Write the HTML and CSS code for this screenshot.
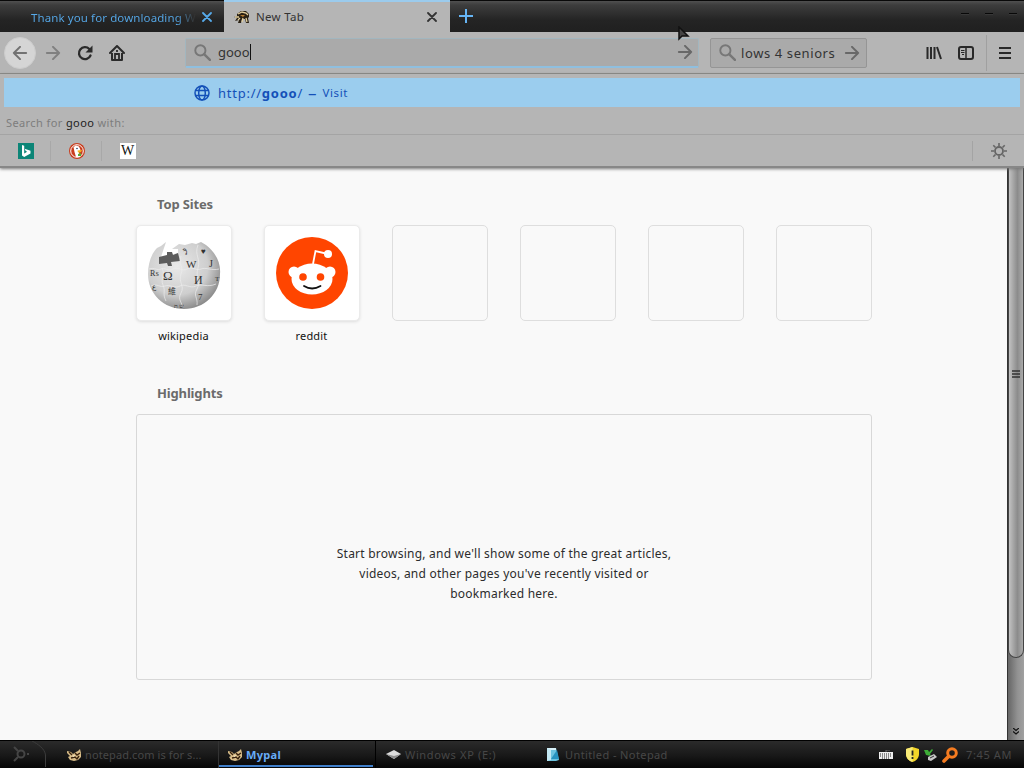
FILE: index.html
```html
<!DOCTYPE html>
<html lang="en">
<head>
    <meta charset="UTF-8">
    <meta name="viewport" content="width=device-width, initial-scale=1.0">
    <title>New Tab</title>
    <link rel="stylesheet" href="styles.css">
</head>
<body>

<svg class="sprites" width="0" height="0">
    <symbol id="arrow" viewBox="0 0 16 16">
        <path d="M1 8h14M8 1l7 7-7 7" fill="none" stroke="currentColor" stroke-width="2.300" stroke-linecap="round" stroke-linejoin="round"/>
    </symbol>
    <symbol id="search" viewBox="0 0 16 16">
        <circle cx="6" cy="6" r="4.800" fill="none" stroke="currentColor" stroke-width="1.800"/>
        <path d="M9.700 9.700L15 15" stroke="currentColor" stroke-width="2.300" stroke-linecap="round"/>
    </symbol>
    <symbol id="close" viewBox="0 0 10 10">
        <path d="M1 1l8 8M9 1L1 9" stroke="currentColor" stroke-width="1.800" stroke-linecap="round"/>
    </symbol>
    <symbol id="badger" viewBox="0 0 16 14">
        <path d="M3 4l4-3 5 0 3 3 0 3-1 1 1 5h-3l-1-4-3 0-1 4H4l1-3-4 1 2-3-3-1 3-1z" fill="#2b2215"/>
        <path d="M4 4l4-2 4 1 2 2M1 7l4 0M4 10l2-2M8 12l1-4M12 8l1 4" stroke="#e2cf9e" stroke-width="1.300" fill="none"/>
        <path d="M6 5l5 0-2 2z" fill="#b57b32"/>
    </symbol>
    <symbol id="mypal" viewBox="0 0 14 12">
        <path d="M0 2l4 1 2 2 3-2 2-1 2-2 1 4 0 4-3 3-4 1-4-1-2-3 2-1-3-3z" fill="#d9bd88"/>
        <path d="M2 3l3 3M8 4l2 2 3-2M4 9l4-1 2 2 2-3" stroke="#39230f" stroke-width="1.400" fill="none"/>
        <path d="M5 7l3-1-1 2z" fill="#fff3d2"/>
    </symbol>
</svg>

<div class="window">
    <header class="titlebar">
        <div class="tab">
            <span class="tab-label">Thank you for downloading W</span>
            <svg class="close" width="10" height="10"><use href="#close"/></svg>
        </div>
        <div class="tab active">
            <svg width="16" height="14"><use href="#badger"/></svg>
            <span class="tab-label">New Tab</span>
            <svg class="close" width="10" height="10"><use href="#close"/></svg>
        </div>
        <svg class="new-tab" width="14" height="14" viewBox="0 0 14 14"><path d="M7 0v14M0 7h14" stroke="currentColor" stroke-width="2"/></svg>
        <div class="window-buttons"><i></i><i></i><i></i></div>
    </header>

    <nav class="toolbar">
        <div class="nav-buttons">
            <span class="back"><svg class="flip" width="16" height="14"><use href="#arrow"/></svg></span>
            <svg class="forward" width="16" height="14"><use href="#arrow"/></svg>
            <svg class="reload" width="16" height="16" viewBox="0 0 16 16"><path d="M13.500 10.500A6 6 0 1 1 12.300 4" fill="none" stroke="currentColor" stroke-width="2.300" stroke-linecap="round"/><path d="M15.500 0.500v7H8.500z" fill="currentColor"/></svg>
            <svg class="home" width="16" height="16" viewBox="0 0 16 16"><path d="M1 8l7-7 7 7" fill="none" stroke="currentColor" stroke-width="2" stroke-linecap="round" stroke-linejoin="round"/><path d="M3 8v7h10V8" fill="none" stroke="currentColor" stroke-width="2" stroke-linejoin="round"/><path d="M6 14V9h4v5M8 5v2" stroke="currentColor" stroke-width="1.800" fill="none"/></svg>
        </div>
        <div class="urlbar">
            <svg width="17" height="17"><use href="#search"/></svg>
            <span class="typed">gooo</span>
            <svg class="go" width="16" height="14"><use href="#arrow"/></svg>
        </div>
        <div class="searchbar">
            <svg width="17" height="17"><use href="#search"/></svg>
            <span class="search-text">lows 4 seniors</span>
            <svg class="go" width="16" height="14"><use href="#arrow"/></svg>
        </div>
        <div class="tools">
            <svg width="16" height="14" viewBox="0 0 16 14"><path d="M1.500 1v12M5 1v12M8.500 1v12M11 1l4 12" stroke="currentColor" stroke-width="2" fill="none"/></svg>
            <svg width="16" height="14" viewBox="0 0 16 14"><rect x="1" y="1" width="14" height="12" rx="2" fill="none" stroke="currentColor" stroke-width="2"/><path d="M8 1v12" stroke="currentColor" stroke-width="1.500"/><path d="M3 4.500h3.500M3 6.500h3.500M4 8.500h2" stroke="currentColor"/></svg>
            <span class="menu"><svg width="12" height="12" viewBox="0 0 12 12"><path d="M0 1h12M0 6h12M0 11h12" stroke="currentColor" stroke-width="2"/></svg></span>
        </div>
    </nav>

    <section class="results">
        <div class="result">
            <svg width="16" height="16" viewBox="0 0 16 16" fill="none" stroke="currentColor" stroke-width="1.500"><circle cx="8" cy="8" r="7"/><ellipse cx="8" cy="8" rx="3.300" ry="7"/><path d="M1.500 5.500h13M1.500 10.500h13"/></svg>
            <span class="url">http://<b>gooo</b>/</span>
            <span class="dash">–</span>
            <span class="visit">Visit</span>
        </div>
        <div class="search-with">Search for <b>gooo</b> with:</div>
        <div class="engines">
            <span class="engine"><svg width="16" height="16" viewBox="0 0 16 16"><rect width="16" height="16" fill="#0c8577"/><path d="M4 2l2.200.8v7.700l3-1.700-1.500-.8-1-2.300 5.800 2.100v2.800L6.200 14 4 12.500z" fill="#fff"/></svg></span>
            <span class="engine"><svg width="16" height="16" viewBox="0 0 16 16"><circle cx="8" cy="8" r="8" fill="#c93d1e"/><circle cx="8" cy="8" r="6.300" fill="#c93d1e" stroke="#fff"/><path d="M4.500 4l2.500-1.500 3 1L11.500 7 10 9l1 5H7L5.500 9z" fill="#fff"/><path d="M8.500 7.500l4.500-.5-1 2-3 .5z" fill="#f6b21a"/><path d="M9 11l3-1v3H9z" fill="#56a834"/><circle cx="8" cy="5.500" r=".8" fill="#243b66"/></svg></span>
            <span class="engine"><span class="wiki-engine">W</span></span>
            <span class="settings"><svg width="16" height="16" viewBox="0 0 16 16" fill="none" stroke="currentColor"><circle cx="8" cy="8" r="4" stroke-width="1.800"/><path d="M8 0v3M8 13v3M0 8h3M13 8h3M2.300 2.300l2.200 2.200M11.500 11.500l2.200 2.200M2.300 13.700l2.200-2.200M11.500 4.500l2.200-2.200" stroke-width="1.600"/></svg></span>
        </div>
    </section>

    <div class="page">
        <main class="content">
            <h2>Top Sites</h2>
            <div class="sites">
                <div class="site">
                    <div class="tile filled">
                        <svg width="74" height="74" viewBox="0 0 74 74">
                            <defs><radialGradient id="ball" cx=".4" cy=".36" r=".66"><stop offset="0" stop-color="#e9e9e9"/><stop offset=".65" stop-color="#cecece"/><stop offset="1" stop-color="#8c8c8c"/></radialGradient></defs>
                            <path d="M10 12l4-2 5-4-2 6-3 9 17-4 0-4-6 0 7-5 6 1 7-2 4 1 5-2 5 3C69 17 74 27 73 38 73 58 57 73 37 73S1 58 1 38C1 28 4 18 10 12z" fill="url(#ball)"/>
                            <path d="M12 21l8-2 0-3h5l1 3 5-2 2 8-9 1 1 4h-4l-1-3-8 1z" fill="#5c5c5c"/>
                            <path d="M2 33c6-2 8 2 12 0s7 3 12 0 9 3 14 0 9 2 14 0 11 2 18 0M4 50c6-3 9 2 14 0s10 3 15 0 10 3 16 0 11 2 20-2M15 32c4 8-2 10 1 17s-1 8 3 16M34 20c-3 9 3 10 0 18s4 12 0 19 2 10 1 14M51 9c-4 10 3 14 0 23s3 14-1 21 1 8 0 16" fill="none" stroke="#ededed" stroke-width=".7"/>
                            <g class="glyphs"><text x="16" y="44" font-size="13">Ω</text><text x="39" y="32" font-size="11">W</text><text x="47" y="48" font-size="12">И</text><text x="21" y="58" font-size="8">維</text><text x="62" y="31" font-size="10">J</text><text x="51" y="64" font-size="9">7</text><text x="36" y="19" font-size="8">วิ</text><text x="54" y="18" font-size="8">♥</text><text x="3" y="40" font-size="8">₨</text><text x="5" y="53" font-size="7">ع</text><text x="27" y="72" font-size="6">ש ת</text><text x="68" y="45" font-size="7">T</text></g>
                        </svg>
                    </div>
                    <span>wikipedia</span>
                </div>
                <div class="site">
                    <div class="tile filled">
                        <svg width="72" height="72" viewBox="0 0 72 72">
                            <circle cx="36" cy="36" r="36" fill="#ff4500"/>
                            <path d="M37 27l2.500-13L52 17" fill="none" stroke="#fff" stroke-width="1.800"/>
                            <g fill="#fff"><circle cx="52" cy="17" r="4"/><circle cx="18" cy="35" r="5.500"/><circle cx="54" cy="35" r="5.500"/><ellipse cx="36" cy="42" rx="20.500" ry="15.500"/></g>
                            <circle cx="27" cy="40" r="3.800" fill="#ff4500"/><circle cx="44.500" cy="40" r="3.800" fill="#ff4500"/>
                            <path d="M28 49q8 5 16.500 0" fill="none" stroke="#111" stroke-width="1.800" stroke-linecap="round"/>
                        </svg>
                    </div>
                    <span>reddit</span>
                </div>
                <div class="site"><div class="tile"></div></div>
                <div class="site"><div class="tile"></div></div>
                <div class="site"><div class="tile"></div></div>
                <div class="site"><div class="tile"></div></div>
            </div>
            <h2>Highlights</h2>
            <div class="highlights">
                <p>Start browsing, and we'll show some of the great articles,<br>videos, and other pages you've recently visited or<br>bookmarked here.</p>
            </div>
        </main>
        <div class="scrollbar">
            <div class="thumb"><svg width="8" height="8" viewBox="0 0 8 8"><path d="M0 1h8M0 4h8M0 7h8" stroke="#333" stroke-width="1.400"/></svg></div>
            <svg class="down" width="6" height="7" viewBox="0 0 6 7"><path d="M0 0l3 2.500L6 0M0 3.500L3 6l3-2.500" fill="none" stroke="#111" stroke-width="1.300"/></svg>
        </div>
    </div>

    <footer class="taskbar">
        <div class="start">
            <svg width="46" height="26" viewBox="0 0 46 26"><path d="M32 0c6 3 13 8 13.500 14v12" fill="none" stroke="#3c3c3c"/><g fill="none" stroke="#454545" stroke-width="2"><circle cx="21" cy="13" r="3.500"/><path d="M14 6l4 4M14 20l4-4M27 13h2"/></g></svg>
        </div>
        <div class="task task-note"><svg width="14" height="12"><use href="#mypal"/></svg><span>notepad.com is for s...</span></div>
        <div class="task task-mypal current"><svg width="14" height="12"><use href="#mypal"/></svg><span>Mypal</span></div>
        <div class="task task-drive"><svg width="15" height="9" viewBox="0 0 15 9"><path d="M0 4l8-4 7 4-7 5z" fill="#ddd"/><path d="M0 4l8 2 7-2-7 5z" fill="#8e8e8e"/></svg><span>Windows XP (E:)</span></div>
        <div class="task task-untitled"><svg width="14" height="15" viewBox="0 0 14 15"><path d="M1 1h9l3 12-3 1-9 0z" fill="#6cc3df"/><path d="M1 1h9v2H1z" fill="#d8f2fa"/><path d="M1 1v13l4-1V3z" fill="#c4e9f4"/><path d="M5 12l6-9 2 9z" fill="#2893bf"/></svg><span>Untitled - Notepad</span></div>
        <div class="tray">
            <svg class="keyboard" width="14" height="9" viewBox="0 0 14 9"><path d="M7 2V0h4" fill="none" stroke="#666"/><rect y="2" width="14" height="7" fill="#eee"/><path d="M1 4h12M1 6h12M3 8h8" stroke="#222" stroke-dasharray="1 1"/></svg>
            <svg width="13" height="15" viewBox="0 0 13 15"><path d="M6.500 0L13 2v5c0 4-3 7-6.500 8C3 14 0 11 0 7V2z" fill="#f3d529"/><path d="M6.500 0L0 2v5c0 4 3 7 6.500 8z" fill="#f9eb78"/><path d="M6.500 3.500v5M6.500 10v2" stroke="#222" stroke-width="1.800"/></svg>
            <svg width="13" height="13" viewBox="0 0 13 13"><path d="M0 2l4 0 1 2 3-3 1 1-3 4 1 2-5-1z" fill="#3dac37"/><path d="M4 9l6-3 3 3-6 4-3-1z" fill="#c8c8c8"/><path d="M6 10l4-2" stroke="#333"/></svg>
            <svg class="magnifier" width="16" height="16" viewBox="0 0 16 16"><circle cx="10" cy="6" r="4.300" fill="none" stroke="#f47b20" stroke-width="3"/><path d="M6.500 9.500L2 14" stroke="#f47b20" stroke-width="3.600" stroke-linecap="round"/></svg>
            <span class="clock">7:45 AM</span>
        </div>
    </footer>

    <svg class="cursor" width="12" height="15" viewBox="0 0 12 15"><path d="M1 1v12l3-3 6 0z" fill="#444" stroke="#111" stroke-width="1.500"/></svg>
</div>

</body>
</html>
```

FILE: styles.css
```css
* {
    box-sizing: border-box;
}
body {
    margin: 0;
    font-family: "Noto Sans", sans-serif;
    font-size: 12px;
    color: #222;
}
svg {
    display: block;
    flex-shrink: 0;
}
.sprites {
    position: absolute;
}
.window {
    width: 1024px;
    height: 768px;
    display: flex;
    flex-direction: column;
    overflow: hidden;
    position: relative;
    white-space: nowrap;
}

/* tabs */
.titlebar {
    height: 32px;
    flex-shrink: 0;
    display: flex;
    background: linear-gradient(#090909 0, #090909 1px, #505050 1px, #3d3d3d 5px, #242424 20px, #202020);
}
.tab {
    width: 224px;
    display: flex;
    align-items: center;
    padding: 2px 12px 0 31px;
    color: #56aaeb;
    font-size: 11.5px;
}
.tab .tab-label {
    width: 165px;
    letter-spacing: 0.1px;
    background: linear-gradient(90deg, #56aaeb 145px, #333 163px);
    background-clip: text;
    color: transparent;
}
.tab .close {
    margin-left: auto;
}
.tab.active {
    width: 226px;
    padding: 0 13px 0 10px;
    border-top: 2px solid #9bcbed;
    background: #b5b5b5;
    color: #333;
}
.active .tab-label {
    width: auto;
    margin: -2px 0 0 6px;
    background: none;
    color: #333;
    letter-spacing: 0.3px;
}
.new-tab {
    margin: 9px 0 0 9px;
    color: #66b5f5;
}
.window-buttons {
    display: flex;
    gap: 16px;
    margin: 13px 7px 0 auto;
}
.window-buttons i {
    width: 8px;
    height: 2px;
    background: #080808;
    border-bottom: 1px solid #383838;
}

/* toolbar */
.toolbar {
    height: 42px;
    flex-shrink: 0;
    display: flex;
    align-items: center;
    padding-left: 4px;
    border-bottom: 1px solid #8b8b87;
    background: #b5b5b5;
}
.nav-buttons {
    width: 181px;
    display: flex;
    align-items: center;
    color: #2b2b2b;
}
.back {
    width: 32px;
    height: 32px;
    display: grid;
    place-items: center;
    border: 1px solid #ccc;
    border-radius: 50%;
    background: #d5d5d5;
    color: #727272;
}
.flip {
    transform: scaleX(-1);
}
.forward {
    margin: 0 16px 0 9px;
    color: #808080;
}
.home {
    margin-left: 16px;
}
.urlbar, .searchbar {
    height: 30px;
    display: flex;
    align-items: center;
    padding: 0 6px 0 8px;
    background: #aaa;
    border: 1px solid #959595;
    border-radius: 2px;
    color: #777;
    font-size: 13px;
}
.urlbar {
    width: 514px;
    padding-right: 5px;
    border-color: #a2b6bf;
    border-bottom: 2px solid #8fbfdf;
}
.typed {
    margin-left: 7px;
    line-height: 16px;
    border-right: 1px solid #111;
    color: #333;
}
.go {
    margin-left: auto;
    color: #686868;
}
.searchbar {
    width: 157px;
    margin-left: 11px;
}
.search-text {
    margin-left: 5px;
    color: #333;
    letter-spacing: 0.6px;
}
.tools {
    display: flex;
    align-items: center;
    margin-left: auto;
    gap: 16px;
    color: #292929;
}
.menu {
    height: 36px;
    display: flex;
    align-items: center;
    margin-left: -4px;
    padding: 0 13px 0 12px;
    border-left: 1px solid #a0a0a0;
}

/* address suggestions */
.results {
    height: 94px;
    flex-shrink: 0;
    padding-top: 4px;
    background: #b5b5b5;
    border-bottom: 2px solid #878787;
    box-shadow: 0 1px 3px #777;
    z-index: 1;
}
.result {
    height: 29px;
    display: flex;
    align-items: center;
    margin: 0 4px;
    padding-left: 190px;
    background: #9bcdee;
    color: #1450b8;
}
.url {
    margin-left: 8px;
    font-size: 13px;
    letter-spacing: 0.75px;
}
.dash {
    margin: 0 6px 0 5px;
    font-size: 17px;
}
.visit {
    font-size: 11.5px;
    letter-spacing: 0.6px;
}
.search-with {
    height: 28px;
    padding: 3px 6px 0;
    line-height: 26px;
    border-bottom: 1px solid #a4a4a4;
    color: #7d7d7d;
    font-size: 11px;
    letter-spacing: 0.4px;
}
.search-with b {
    font-weight: normal;
    color: #222;
}
.engines {
    height: 32px;
    display: flex;
    align-items: center;
}
.engine {
    width: 51px;
    height: 20px;
    display: grid;
    place-items: center;
    padding-left: 1px;
    border-right: 1px solid #a8a8a8;
}
.engine:nth-child(3) {
    border: 0;
    padding: 0;
}
.wiki-engine {
    width: 16px;
    height: 16px;
    display: grid;
    place-items: center;
    background: #fff;
    color: #111;
    font: 14px/16px "Liberation Serif", serif;
}
.settings {
    margin-left: auto;
    padding: 2px 17px 2px 18px;
    border-left: 1px solid #a4a4a4;
    color: #666;
}

/* new tab page */
.page {
    flex: 1;
    min-height: 0;
    display: flex;
    background: #f9f9f9;
}
.content {
    width: 736px;
    margin: 26px 0 0 136px;
}
.content h2 {
    margin: 0 0 11px 21px;
    font-size: 13px;
    line-height: 20px;
    color: #6b6b6b;
    letter-spacing: -0.15px;
}
.sites {
    display: flex;
    gap: 32px;
    height: 158px;
}
.site {
    width: 96px;
    text-align: center;
    font-size: 11px;
    color: #111;
}
.site > span {
    display: block;
    margin: 7px 1px 0 0;
    line-height: 16px;
    letter-spacing: 0.2px;
}
.tile {
    height: 96px;
    display: grid;
    place-items: center;
    border: 1px solid #dedede;
    border-radius: 5px;
}
.tile.filled {
    background: #fff;
    border-color: #ebebeb;
    box-shadow: 0 1px 3px #ddd;
}
.glyphs {
    font-family: "Liberation Serif", "Noto Sans CJK SC", serif;
    fill: #333;
}
.highlights {
    height: 266px;
    display: flex;
    justify-content: center;
    padding-top: 129px;
    border: 1px solid #d8d8d8;
    border-radius: 3px;
}
.highlights p {
    margin: 0;
    text-align: center;
    font-size: 12px;
    line-height: 20px;
    letter-spacing: 0.23px;
    color: #2c2c2c;
}
.scrollbar {
    width: 17px;
    margin-left: auto;
    border-left: 1px solid #333;
    background: linear-gradient(90deg, #666, #929292 60%, #a0a0a0);
    display: flex;
    flex-direction: column;
    align-items: center;
}
.thumb {
    width: 16px;
    height: 490px;
    padding: 202px 0 0 4px;
    border: 1px solid #444;
    border-top: 0;
    border-radius: 0 0 8px 8px;
    background: linear-gradient(90deg, #c2c2c2, #8b8b8b 60%, #aaa);
}
.thumb svg {
    margin-left: -1px;
}
.down {
    margin-top: 70px;
}

/* taskbar */
.taskbar {
    height: 28px;
    flex-shrink: 0;
    display: flex;
    border-top: 1px solid #000;
    background: linear-gradient(#2b2b2b, #181818 55%, #050505);
    color: #474747;
    font-size: 11px;
}
.start {
    width: 58px;
}
.task {
    display: flex;
    align-items: center;
    gap: 4px;
    padding-left: 9px;
}
.task-note {
    width: 160px;
    letter-spacing: 0.1px;
}
.task-mypal {
    width: 158px;
    border-right: 1px solid #000;
}
.task.current {
    background: linear-gradient(transparent 24px, #3f7ec9 24px, #3f7ec9 26px, transparent 26px) 0 0 / 154px 100% no-repeat;
    border-left: 1px solid #333;
    color: #68acf7;
    font-weight: bold;
    letter-spacing: 0.3px;
}
.task-drive {
    width: 160px;
    padding-left: 10px;
    letter-spacing: 0.65px;
}
.task-untitled {
    padding-left: 10px;
    gap: 5px;
    letter-spacing: 0.4px;
}
.tray {
    display: flex;
    align-items: center;
    gap: 5px;
    margin-left: auto;
    padding-right: 12px;
}
.keyboard {
    margin-right: 8px;
}
.clock {
    margin-left: 3px;
    letter-spacing: 0.6px;
}
.cursor {
    position: absolute;
    left: 678px;
    top: 26px;
    z-index: 2;
}
```
